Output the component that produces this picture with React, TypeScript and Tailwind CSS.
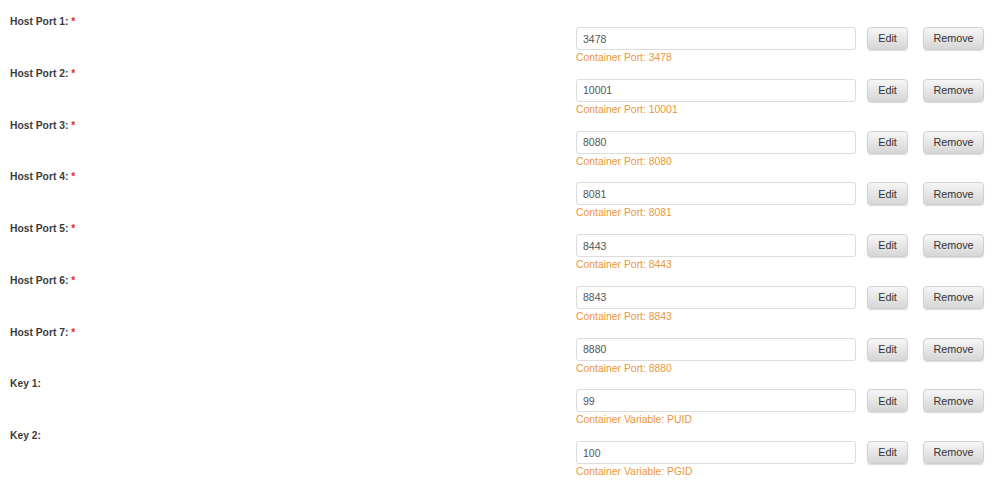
import React from "react";

interface Row {
  label: string;
  required: boolean;
  value: string;
  hint: string;
}

const rows: Row[] = [
  { label: "Host Port 1:", required: true, value: "3478", hint: "Container Port: 3478" },
  { label: "Host Port 2:", required: true, value: "10001", hint: "Container Port: 10001" },
  { label: "Host Port 3:", required: true, value: "8080", hint: "Container Port: 8080" },
  { label: "Host Port 4:", required: true, value: "8081", hint: "Container Port: 8081" },
  { label: "Host Port 5:", required: true, value: "8443", hint: "Container Port: 8443" },
  { label: "Host Port 6:", required: true, value: "8843", hint: "Container Port: 8843" },
  { label: "Host Port 7:", required: true, value: "8880", hint: "Container Port: 8880" },
  { label: "Key 1:", required: false, value: "99", hint: "Container Variable: PUID" },
  { label: "Key 2:", required: false, value: "100", hint: "Container Variable: PGID" },
];

const btn =
  "h-[23px] rounded-[4px] border border-[#d0d0d0] bg-gradient-to-b from-[#f6f6f6] to-[#d6d6d6] text-[10.8px] text-[#333] shadow-[0_1px_1px_rgba(0,0,0,0.15)]";

const ConfigRow = ({ row }: { row: Row }) => (
  <div className="flex h-[51.75px]">
    <div className="w-[576px] shrink-0 pl-[10px] text-[10.3px] font-bold leading-[14px] text-[#3b3b3b]">
      {row.label}
      {row.required && <span className="text-[#e0302b]"> *</span>}
    </div>
    <div className="flex flex-col pt-[12px]">
      <div className="flex items-start">
        <input
          className="h-[23px] w-[280px] rounded-[3px] border border-[#dcdcdc] bg-white px-[6px] text-[10.5px] text-[#555] outline-none"
          defaultValue={row.value}
          readOnly
        />
        <button className={`${btn} ml-[11px] w-[41px]`}>Edit</button>
        <button className={`${btn} ml-[15px] w-[61px]`}>Remove</button>
      </div>
      <span className="pt-[1px] text-[10.4px] leading-[14px] text-[#eb9640]">{row.hint}</span>
    </div>
  </div>
);

const App = () => {
  return (
    <div
      className="h-[480px] w-[1000px] overflow-hidden bg-white pt-[15px]"
      style={{ fontFamily: '"Liberation Sans", Arial, sans-serif' }}
    >
      {rows.map((row) => (
        <ConfigRow key={row.label} row={row} />
      ))}
    </div>
  );
};

export default App;
